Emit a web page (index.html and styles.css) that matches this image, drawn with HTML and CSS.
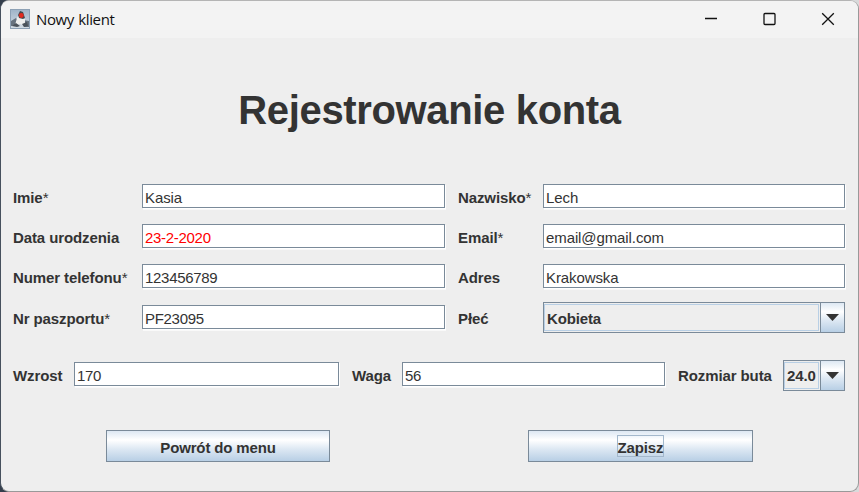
FILE: index.html
```html
<!DOCTYPE html>
<html lang="pl">
<head>
<meta charset="utf-8">
<title>Nowy klient</title>
<link rel="stylesheet" href="styles.css">
</head>
<body>
<main class="window">
  <header class="titlebar">
    <svg class="app-icon" width="20" height="20" viewBox="0 0 20 20">
      <defs><linearGradient id="sky" x2="0" y2="1"><stop stop-color="#9fb4c8"/><stop offset="1" stop-color="#d3dce4"/></linearGradient></defs>
      <rect x=".5" y=".5" width="19" height="19" fill="url(#sky)" stroke="#8da1b5"/>
      <path d="M1 12l5-3 2 3-1 5H1zM13 11l6 1v6h-5z" fill="#66727e"/>
      <path d="M9 5L7 9l-2 7 5-1 5 2v-7z" fill="#eeefee"/>
      <path d="M8 6l2-4 3 1 2 6-2 1-4-1z" fill="#45484c"/>
      <path d="M2 17l4-3 4 3-3 1zM12 15l5-2 1 4-4 1z" fill="#4b535b"/>
      <circle cx="11.3" cy="6.5" r="2.4" fill="#e32a20"/>
    </svg>
    <span class="caption">Nowy klient</span>
    <div class="controls">
      <svg width="14" height="14" viewBox="0 0 14 14"><path d="M1 6.5h12"/></svg>
      <svg width="14" height="14" viewBox="0 0 14 14"><rect x="1" y="1.5" width="11" height="11" rx="1"/></svg>
      <svg width="14" height="14" viewBox="0 0 14 14"><path d="M1.2 1.2l11.6 11.6M12.8 1.2L1.2 12.8"/></svg>
    </div>
  </header>
  <h1 class="heading">Rejestrowanie konta</h1>
  <form class="fields">
    <span class="label">Imie<i>*</i></span><div class="input">Kasia</div>
    <span class="label second">Nazwisko<i>*</i></span><div class="input">Lech</div>
    <span class="label">Data urodzenia</span><div class="input numeric invalid">23-2-2020</div>
    <span class="label second">Email<i>*</i></span><div class="input">email@gmail.com</div>
    <span class="label">Numer telefonu<i>*</i></span><div class="input numeric">123456789</div>
    <span class="label second">Adres</span><div class="input">Krakowska</div>
    <span class="label">Nr paszportu<i>*</i></span><div class="input numeric">PF23095</div>
    <span class="label second">Płeć</span>
    <div class="combo"><span class="value">Kobieta</span><span class="arrow"><svg width="13" height="7" viewBox="0 0 13 7"><path d="M0 0h13L6.5 7z"/></svg></span></div>
  </form>
  <section class="measures">
    <span class="label">Wzrost</span><div class="input numeric">170</div>
    <span class="label second">Waga</span><div class="input numeric">56</div>
    <span class="label second">Rozmiar buta</span>
    <div class="combo"><span class="value">24.0</span><span class="arrow"><svg width="13" height="7" viewBox="0 0 13 7"><path d="M0 0h13L6.5 7z"/></svg></span></div>
  </section>
  <footer class="actions">
    <div class="button">Powrót do menu</div>
    <div class="button"><span class="focus">Zapisz</span></div>
  </footer>
</main>
</body>
</html>
```
FILE: styles.css
```css
* { box-sizing: border-box; }
body {
  margin: 0;
  width: 859px;
  height: 492px;
  overflow: hidden;
  background: linear-gradient(90deg, #343e4c 50%, #d9dadb 50%);
  font: 15px "Liberation Sans", Arial, sans-serif;
  color: #333;
}
.window {
  height: 492px;
  border: 1px solid #999;
  border-left-color: #46505d;
  border-top-color: #b4b4b4;
  border-radius: 9px;
  background: #eee;
  overflow: hidden;
}
.titlebar {
  height: 37px;
  display: flex;
  align-items: center;
  padding: 0 23px 0 9px;
  background: #f3f3f3;
  color: #111;
}
.app-icon { margin-top: -1px; }
.caption { font: 15px "Open Sans", "Noto Sans", sans-serif; letter-spacing: -.4px; word-spacing: 1px; margin: -1px 0 0 6px; }
.controls { display: flex; gap: 44.5px; margin: -2px 0 0 auto; }
.controls svg { fill: none; stroke: #111; stroke-width: 1.3; }
.heading {
  height: 146px;
  margin: 0;
  text-align: center;
  font-size: 40px;
  letter-spacing: -.35px;
  line-height: 144px;
}
.fields {
  display: grid;
  grid-template-columns: 129px 303px 98px 302px;
  grid-template-rows: 24px 24px 24px 26px;
  row-gap: 16px;
  align-items: center;
  padding-left: 12px;
  height: 149px;
}
.label {
  font-weight: bold;
  letter-spacing: -.1px;
  white-space: nowrap;
  padding-top: 3px;
}
.label i { font-style: normal; font-weight: normal; }
.label.second { padding-left: 13px; }
.input {
  height: 24px;
  border: 1px solid #7a8a99;
  background: #fff;
  box-shadow: 1px 1px 0 #fff, 1px 2px 0 #f9f9f9;
  padding: 2px 0 0 2px;
  line-height: 22px;
  letter-spacing: -.1px;
  white-space: nowrap;
}
.numeric { letter-spacing: -.3px; }
.invalid { color: #f00; }
.combo {
  display: flex;
  height: 31px;
  border: 1px solid #7a8a99;
  font-weight: bold;
}
.fields .combo { margin: -2px 0 -3px; }
.value {
  flex: 1;
  margin: 1px 1px 1px 0;
  border: 1px solid #b8cfe5;
  padding-left: 2px;
  line-height: 27px;
  letter-spacing: -.15px;
}
.arrow {
  width: 24px;
  flex: none;
  border-left: 1px solid #7a8a99;
  display: flex;
  align-items: center;
  justify-content: center;
  background: linear-gradient(#dde8f3, #fff 30%, #dde8f3 60%, #b8cfe5);
}
.arrow svg { fill: #333; }
.measures {
  display: grid;
  grid-template-columns: 61px 265px 63px 263px 118px 62px;
  align-items: center;
  height: 31px;
  margin-top: 27px;
  padding-left: 12px;
}
.measures .input { margin-top: -4px; }
.measures .label { padding-top: 0; }
.measures .value { line-height: 26px; }
.actions {
  display: flex;
  gap: 198px;
  padding: 39px 0 0 105px;
}
.button {
  width: 224px;
  height: 32px;
  display: flex;
  align-items: center;
  justify-content: center;
  padding-top: 3px;
  border: 1px solid #7a8a99;
  background: linear-gradient(#dde8f3, #fff 30%, #dde8f3 60%, #b8cfe5);
  font-weight: bold;
  letter-spacing: -.15px;
}
.button:last-child { width: 225px; }
.focus { border: 1px solid #a3b8cc; padding: 2px 0 0; height: 22px; line-height: 19px; margin-top: -3px; }
```
